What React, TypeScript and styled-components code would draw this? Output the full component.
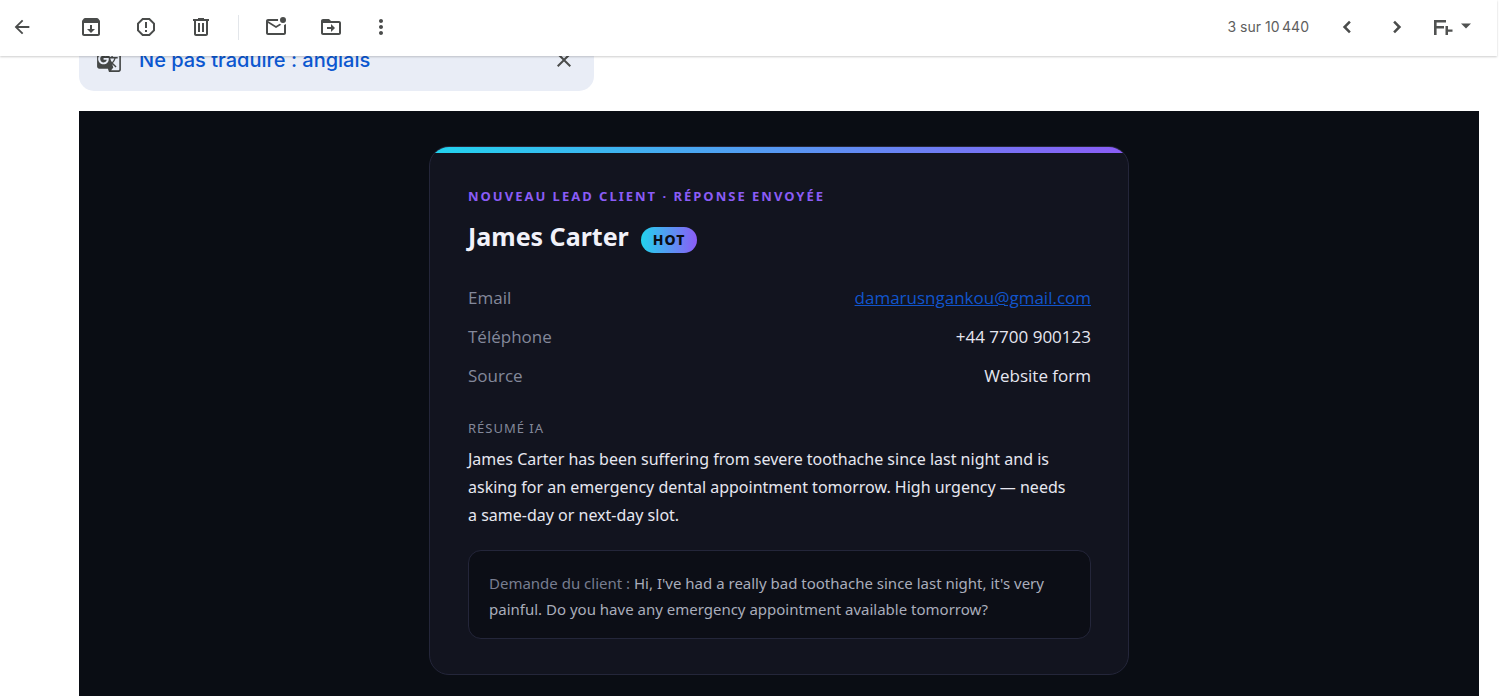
import React from "react";
import styled, { createGlobalStyle } from "styled-components";

const Global = createGlobalStyle`
  *, *::before, *::after { box-sizing: border-box; }
  body { margin: 0; background: #fff; font-family: "Noto Sans", "Open Sans", sans-serif; }
  h1, p, dl, dd, dt, h2 { margin: 0; }
  button { font: inherit; border: 0; background: none; padding: 0; cursor: pointer; }
`;

const Page = styled.div`
  height: 100vh;
  display: flex;
  flex-direction: column;
  overflow: hidden;
`;

const Toolbar = styled.header`
  flex: none;
  height: 56px;
  margin-right: 4px;
  padding: 0 19px 2px 2px;
  display: flex;
  align-items: center;
  justify-content: space-between;
  position: relative;
  z-index: 1;
  background: #fff;
  box-shadow: 0 1px 2px rgba(0, 0, 0, 0.2);
`;

const Group = styled.div<{ $gap: number }>`
  display: flex;
  align-items: center;
  gap: ${(p) => p.$gap}px;
`;

const IconButton = styled.button<{ $width?: number }>`
  width: ${(p) => p.$width ?? 40}px;
  height: 40px;
  display: flex;
  align-items: center;
  justify-content: center;
  color: #4a4c4b;
  svg { display: block; fill: currentColor; }
`;

const BackButton = styled(IconButton)`
  margin-right: 14px;
`;

const Divider = styled.span`
  width: 1px;
  height: 25px;
  margin: 0 2px;
  background: #e3e6ea;
`;

const Counter = styled.span`
  margin-right: 8px;
  color: #5e5e5e;
  font: 400 14px/20px Inter, sans-serif;
`;

const InputTools = styled.button`
  height: 40px;
  margin-left: 5px;
  display: flex;
  align-items: center;
  color: #505251;
  svg { display: block; fill: currentColor; }
`;

const Message = styled.main`
  flex: 1;
  min-height: 0;
  margin: -26px 22px 0 79px;
  display: flex;
  flex-direction: column;
  gap: 20px;
`;

const TranslateBar = styled.div`
  flex: none;
  width: 515px;
  max-width: 100%;
  height: 61px;
  padding: 0 10px 2px 17px;
  display: flex;
  align-items: center;
  gap: 17px;
  border-radius: 15px;
  background: #e9edf6;
  color: #444746;
  svg { fill: currentColor; }
`;

const TranslateLink = styled.button`
  margin-right: auto;
  color: #0b57d0;
  && { font: 500 20px/24px Inter, sans-serif; }
`;

const Mail = styled.section`
  flex: 1;
  min-height: 0;
  padding: 35px 20px 20px;
  background: #0a0d14;
`;

const Card = styled.article`
  width: 100%;
  max-width: 700px;
  margin: 0 auto;
  overflow: hidden;
  border: 1px solid #24263a;
  border-radius: 20px;
  background: #12141f;
`;

const Stripe = styled.div`
  height: 6px;
  background: linear-gradient(90deg, #22d3ee, #8b5cf6);
`;

const CardBody = styled.div`
  padding: 32px 37px 35px 38px;
`;

const Eyebrow = styled.p`
  color: #8b5cf6;
  font-size: 13px;
  font-weight: 700;
  line-height: 22px;
  letter-spacing: 2px;
  text-transform: uppercase;
`;

const TitleRow = styled.div`
  margin-top: 11px;
  display: flex;
  align-items: center;
  gap: 12px;
`;

const Name = styled.h1`
  color: #f1f1f9;
  font-size: 25px;
  font-weight: 700;
  line-height: 36px;
`;

const Badge = styled.span`
  margin-top: 7px;
  padding: 0 12px;
  border-radius: 13px;
  background: linear-gradient(90deg, #22d3ee, #8b5cf6);
  color: #0a0d14;
  font-size: 14px;
  font-weight: 800;
  line-height: 26px;
  letter-spacing: 1px;
`;

const Details = styled.dl`
  margin-top: 24px;
`;

const DetailRow = styled.div`
  display: flex;
  justify-content: space-between;
  font-family: "Open Sans", "Noto Sans", sans-serif;
  font-size: 17px;
  line-height: 39px;
`;

const Term = styled.dt`
  color: #83889a;
`;

const Value = styled.dd`
  color: #e6e7f0;
  a { color: #1155cc; }
`;

const SectionLabel = styled.h2`
  margin-top: 21px;
  color: #83889a;
  font-size: 13px;
  font-weight: 400;
  line-height: 24px;
  letter-spacing: 1px;
  text-transform: uppercase;
`;

const Summary = styled.p`
  margin-top: 5px;
  color: #e6e7f0;
  font-size: 16px;
  line-height: 28px;
`;

const Quote = styled.p`
  margin-top: 21px;
  padding: 19px 20px 16px;
  border: 1px solid #24263a;
  border-radius: 13px;
  background: #0c0e16;
  color: #a9adbb;
  font-size: 15px;
  line-height: 26px;
`;

const QuoteLabel = styled.span`
  color: #777d90;
`;

const Icon = ({ d, size = 24 }: { d: string; size?: number }) => (
  <svg width={size} height={size} viewBox="0 0 24 24" aria-hidden="true">
    <path fillRule="evenodd" d={d} />
  </svg>
);

const icons = {
  back: "M20 11H7.83l5.59-5.59L12 4l-8 8 8 8 1.41-1.41L7.83 13H20v-2z",
  archive:
    "M20.54 5.23l-1.39-1.68C18.88 3.21 18.47 3 18 3H6c-.47 0-.88.21-1.16.55L3.46 5.23C3.17 5.57 3 6.02 3 6.5V19c0 1.1.9 2 2 2h14c1.1 0 2-.9 2-2V6.5c0-.48-.17-.93-.46-1.27zM5 19V8h14v11H5zM11 10h2v4h3l-4 4-4-4h3z",
  spam: "M15.73 3H8.27L3 8.27v7.46L8.27 21h7.46L21 15.73V8.27L15.73 3zM19 14.9L14.9 19H9.1L5 14.9V9.1L9.1 5h5.8L19 9.1v5.8zM11 7h2v6h-2zM11 15h2v2h-2z",
  trash:
    "M15 4V3H9v1H4v2h1v13c0 1.1.9 2 2 2h10c1.1 0 2-.9 2-2V6h1V4h-5zm2 15H7V6h10v13zM9 8h2v9H9zM13 8h2v9h-2z",
  unread:
    "M22 8.98V18c0 1.1-.9 2-2 2H4c-1.1 0-2-.9-2-2V6c0-1.1.9-2 2-2h10.1a5 5 0 0 0 0 2H4l8 5 3.67-2.29c.47.43 1.02.76 1.63.98L12 13 4 8v10h16V9.9c.74-.15 1.42-.48 2-.92zM16 5a3 3 0 1 0 6 0 3 3 0 1 0-6 0z",
  move: "M20 6h-8l-2-2H4c-1.1 0-2 .9-2 2v12c0 1.1.9 2 2 2h16c1.1 0 2-.9 2-2V8c0-1.1-.9-2-2-2zm0 12H4V8h16v10zM12 9l4 4-4 4v-3H8v-2h4z",
  more: "M12 8c1.1 0 2-.9 2-2s-.9-2-2-2-2 .9-2 2 .9 2 2 2zm0 2c-1.1 0-2 .9-2 2s.9 2 2 2 2-.9 2-2-.9-2-2-2zm0 6c-1.1 0-2 .9-2 2s.9 2 2 2 2-.9 2-2-.9-2-2-2z",
  prev: "M15.8 7.6L14 5.8 7.8 12l6.2 6.2 1.8-1.8L11.4 12z",
  next: "M10 5.8L8.2 7.6l4.4 4.4-4.4 4.4 1.8 1.8 6.2-6.2z",
  caret: "M7 8.500l5 5 5-5z",
  translate:
    "M21 4H11l-1-3H3c-1.1 0-2 .9-2 2v15c0 1.1.9 2 2 2h8l1 3h9c1.1 0 2-.9 2-2V6c0-1.1-.9-2-2-2zM7 16c-2.76 0-5-2.24-5-5s2.24-5 5-5c1.35 0 2.48.5 3.35 1.3L9.03 8.57c-.38-.36-1.04-.78-2.03-.78-1.74 0-3.15 1.44-3.15 3.21S5.26 14.21 7 14.21c2.01 0 2.84-1.44 2.92-2.41H7v-1.71h4.68c.07.31.12.61.12 1.02C11.8 13.97 9.89 16 7 16zm6.17-5.42h3.7c-.43 1.25-1.11 2.43-2.05 3.47-.31-.35-.6-.72-.86-1.1l-.79-2.37zm8.33 9.92c0 .55-.45 1-1 1H14l2-2.5-1.04-3.1 3.1 3.1.92-.92-3.3-3.25.02-.02c1.13-1.25 1.93-2.69 2.4-4.22H20v-1.3h-4.53V8h-1.29v1.29h-1.44L11.46 5.5h9.04c.55 0 1 .45 1 1v14z",
  close:
    "M19 6.41L17.59 5 12 10.59 6.41 5 5 6.41 10.59 12 5 17.59 6.41 19 12 13.41 17.59 19 19 17.59 13.41 12z",
};

const Action = ({ label, d, width }: { label: string; d: string; width?: number }) => (
  <IconButton type="button" aria-label={label} $width={width}>
    <Icon d={d} />
  </IconButton>
);

export default function App() {
  return (
    <>
      <Global />
      <Page>
        <Toolbar>
          <Group $gap={15}>
            <BackButton type="button" aria-label="Retour">
              <Icon d={icons.back} size={22} />
            </BackButton>
            <Action label="Archiver" d={icons.archive} />
            <Action label="Signaler comme spam" d={icons.spam} />
            <Action label="Supprimer" d={icons.trash} />
            <Divider />
            <Action label="Marquer comme non lu" d={icons.unread} />
            <Action label="Déplacer vers" d={icons.move} />
            <Action label="Plus" d={icons.more} width={30} />
          </Group>
          <Group $gap={10}>
            <Counter>3 sur 10{"\u202f"}440</Counter>
            <Action label="Plus récents" d={icons.prev} />
            <Action label="Plus anciens" d={icons.next} />
            <InputTools type="button" aria-label="Outils de saisie">
              <svg width="22" height="22" viewBox="0 0 22 22" aria-hidden="true">
                <path d="M2 4h12v2.500H4.600v3.500H12v2.500H4.600V19H2zM13.500 10h2.500v3.500h4.500v2.200H16V19h-2.500z" />
              </svg>
              <Icon d={icons.caret} />
            </InputTools>
          </Group>
        </Toolbar>
        <Message>
          <TranslateBar>
            <Icon d={icons.translate} size={26} />
            <TranslateLink type="button">Ne pas traduire : anglais</TranslateLink>
            <IconButton type="button" aria-label="Fermer">
              <Icon d={icons.close} />
            </IconButton>
          </TranslateBar>
          <Mail>
            <Card>
              <Stripe />
              <CardBody>
                <Eyebrow>Nouveau lead client · Réponse envoyée</Eyebrow>
                <TitleRow>
                  <Name>James Carter</Name>
                  <Badge>HOT</Badge>
                </TitleRow>
                <Details>
                  <DetailRow>
                    <Term>Email</Term>
                    <Value>
                      <a href="mailto:damarusngankou@gmail.com">damarusngankou@gmail.com</a>
                    </Value>
                  </DetailRow>
                  <DetailRow>
                    <Term>Téléphone</Term>
                    <Value>+44 7700 900123</Value>
                  </DetailRow>
                  <DetailRow>
                    <Term>Source</Term>
                    <Value>Website form</Value>
                  </DetailRow>
                </Details>
                <SectionLabel>Résumé IA</SectionLabel>
                <Summary>
                  {
                    "James Carter has been suffering from severe toothache since last night and is asking for an emergency dental appointment tomorrow. High urgency — needs a\u00a0same-day or next-day slot."
                  }
                </Summary>
                <Quote>
                  <QuoteLabel>Demande du client :</QuoteLabel> Hi, I've had a really bad toothache
                  since last night, it's very painful. Do you have any emergency appointment
                  available tomorrow?
                </Quote>
              </CardBody>
            </Card>
          </Mail>
        </Message>
      </Page>
    </>
  );
}
